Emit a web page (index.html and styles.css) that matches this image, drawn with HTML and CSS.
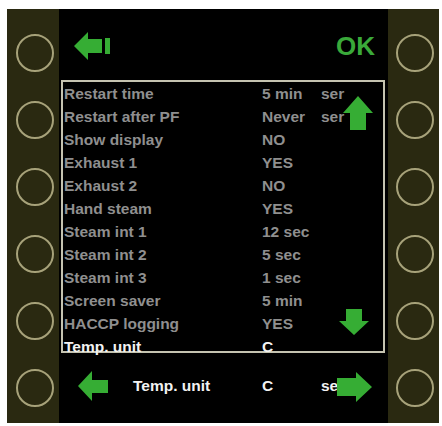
FILE: index.html
```html
<!DOCTYPE html>
<html>
<head>
<meta charset="utf-8">
<link rel="stylesheet" href="styles.css">
</head>
<body>
<div class="device">
  <div class="side side-left">
    <span class="knob"></span><span class="knob"></span><span class="knob"></span>
    <span class="knob"></span><span class="knob"></span><span class="knob"></span>
  </div>
  <div class="screen">
    <div class="header">
      <svg class="back" width="37" height="28" viewBox="0 0 37 28"><path d="M0 14 L14 0 L14 7 L28 7 L28 21 L14 21 L14 28 Z"/><rect x="31" y="6" width="5" height="16"/></svg>
      <span class="ok">OK</span>
    </div>
    <div class="list">
      <div class="row"><span>Restart time</span><span>5 min</span><span>ser</span></div>
      <div class="row"><span>Restart after PF</span><span>Never</span><span>ser</span></div>
      <div class="row"><span>Show display</span><span>NO</span><span></span></div>
      <div class="row"><span>Exhaust 1</span><span>YES</span><span></span></div>
      <div class="row"><span>Exhaust 2</span><span>NO</span><span></span></div>
      <div class="row"><span>Hand steam</span><span>YES</span><span></span></div>
      <div class="row"><span>Steam int 1</span><span>12 sec</span><span></span></div>
      <div class="row"><span>Steam int 2</span><span>5 sec</span><span></span></div>
      <div class="row"><span>Steam int 3</span><span>1 sec</span><span></span></div>
      <div class="row"><span>Screen saver</span><span>5 min</span><span></span></div>
      <div class="row"><span>HACCP logging</span><span>YES</span><span></span></div>
      <div class="row current"><span>Temp. unit</span><span>C</span><span></span></div>
      <svg class="arrow-up" width="30" height="34" viewBox="0 0 30 34"><path d="M15 0 L30 17 L23 17 L23 34 L7 34 L7 17 L0 17 Z"/></svg>
      <svg class="arrow-down" width="30" height="26" viewBox="0 0 30 26"><path d="M7 0 L23 0 L23 12 L30 12 L15 26 L0 12 L7 12 Z"/></svg>
    </div>
    <div class="footer">
      <svg class="prev" width="30" height="30" viewBox="0 0 30 30"><path d="M0 15 L14 0 L14 9 L30 9 L30 22 L14 22 L14 30 Z"/></svg>
      <span class="f-name">Temp. unit</span>
      <span class="f-val">C</span>
      <span class="f-extra">ser</span>
      <svg class="next" width="35" height="30" viewBox="0 0 35 30"><path d="M0 6 L19 6 L19 0 L35 15 L19 30 L19 24 L0 24 Z"/></svg>
    </div>
  </div>
  <div class="side side-right">
    <span class="knob"></span><span class="knob"></span><span class="knob"></span>
    <span class="knob"></span><span class="knob"></span><span class="knob"></span>
  </div>
</div>
</body>
</html>
```
FILE: styles.css
```css
html, body {
  margin: 0;
  padding: 0;
  background: #ffffff;
}
body {
  font-family: "Liberation Sans", Arial, sans-serif;
}
.device {
  margin: 9px 0 0 7px;
  width: 432px;
  height: 414px;
  display: flex;
}
.side {
  background: #2a2911;
  display: flex;
  flex-direction: column;
  gap: 29px;
  padding-top: 25px;
  box-sizing: border-box;
}
.side-left {
  width: 52px;
  padding-left: 9px;
}
.side-right {
  width: 51px;
  padding-left: 8px;
}
.knob {
  display: block;
  width: 34px;
  height: 34px;
  border: 2px solid #a7a27a;
  border-radius: 50%;
}
.screen {
  width: 329px;
  background: #000;
  display: flex;
  flex-direction: column;
}
.header {
  height: 71px;
  box-sizing: border-box;
  padding: 2px 13px 0 15px;
  display: flex;
  align-items: center;
  justify-content: space-between;
}
.back, .arrow-up, .arrow-down, .prev, .next {
  fill: #36ad34;
  display: block;
}
.ok {
  color: #3aa93a;
  font-weight: bold;
  font-size: 26px;
  line-height: 1;
}
.list {
  position: relative;
  margin: 0 3px 0 2px;
  height: 273px;
  box-sizing: border-box;
  border: 2px solid #c5c3b0;
}
.row {
  display: grid;
  grid-template-columns: 198px 59px 1fr;
  height: 23px;
  line-height: 23px;
  padding-left: 1px;
  font-weight: bold;
  font-size: 15.5px;
  color: #8f8f8f;
  white-space: nowrap;
}
.row.current {
  color: #f2f2f2;
}
.arrow-up {
  position: absolute;
  left: 280px;
  top: 14px;
}
.arrow-down {
  position: absolute;
  left: 276px;
  top: 227px;
}
.footer {
  position: relative;
  flex: 1;
  display: flex;
  align-items: center;
  padding: 0 0 4px 19px;
  font-weight: bold;
  font-size: 15.5px;
  color: #f2f2f2;
  white-space: nowrap;
}
.prev {
  margin-right: 25px;
}
.f-name {
  width: 129px;
}
.f-val {
  width: 59px;
}
.next {
  position: absolute;
  left: 278px;
  top: 19px;
}
```
